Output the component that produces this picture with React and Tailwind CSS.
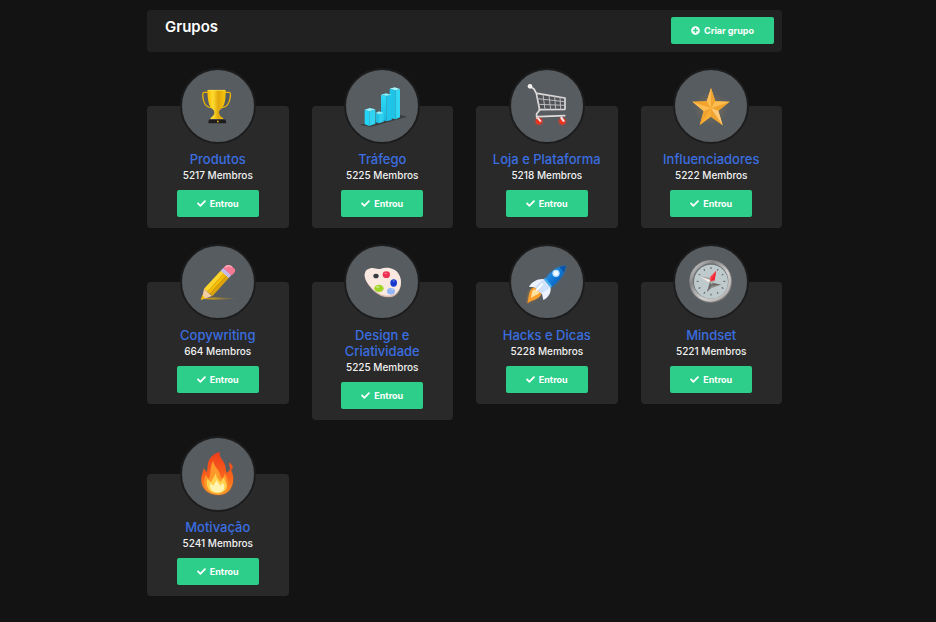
import { FaCheck, FaPlusCircle } from 'react-icons/fa';

function TrophyIcon() {
  return (
    <>
      <defs>
        <linearGradient id="trophy-gold" x1="0" x2="1">
          <stop offset="0" stopColor="#f6b900" />
          <stop offset="0.3" stopColor="#ffdc2e" />
          <stop offset="0.6" stopColor="#e0a80c" />
          <stop offset="1" stopColor="#f8c70a" />
        </linearGradient>
      </defs>
      <path d="M92 80H79c-7 0-3 26 3 35 5 8 12 11 22 11M138 80h17c7 0 2 26-4 35-5 8-12 11-22 11" fill="none" stroke="#eab308" strokeWidth="4" />
      <path d="M89 73h55c0 28-2 49-15 58-6 5-6 12-3 17 3 6 9 7 12 13H97c2-6 8-8 11-13 3-5 3-12-3-17-13-10-15-30-16-58z" fill="url(#trophy-gold)" />
      <path d="M91 74h51" stroke="#ffe45c" strokeWidth="2" />
      <path d="M94 160h49l3 13H92z" fill="#1e1c1c" />
      <path d="M94 160h49l1 3H94z" fill="#454040" />
      <rect x="118" y="165" width="5" height="5" fill="#eab308" />
    </>
  );
}

function ChartIcon() {
  return (
    <>
      <defs>
        <linearGradient id="bar-cyan" x1="0" y1="0" x2="0" y2="1">
          <stop offset="0" stopColor="#2fdcf8" />
          <stop offset="1" stopColor="#19b9e2" />
        </linearGradient>
      </defs>
      <path d="M54 178l108-34 35 9-110 31z" fill="#3c3d3f" />
      <path d="M144 69l18 5v87l-18-4z" fill="#1dc4e8" />
      <path d="M162 74l13-4v85l-13 6z" fill="#30d6f2" />
      <path d="M144 69l15-4 16 5-13 4z" fill="#a4f8ff" />
      <path d="M118 87l16 4v76l-16-5z" fill="url(#bar-cyan)" />
      <path d="M134 91l16-4v76l-16 4z" fill="#22c3e9" />
      <path d="M118 87l15-4 17 4-16 4z" fill="#7cf3ff" />
      <path d="M102 142l10 4v27l-10-3z" fill="#20bfe6" />
      <path d="M112 146l14-4v26l-14 5z" fill="#2fd0ee" />
      <path d="M102 142l10-5 14 5-14 4z" fill="#8af4ff" />
      <path d="M69 132l14 5v44l-14-5z" fill="#22d4f5" />
      <path d="M83 137l18-6v43l-18 7z" fill="#30d4f2" />
      <path d="M69 132l15-5 17 4-18 6z" fill="#8ef6ff" />
    </>
  );
}

function CartIcon() {
  return (
    <>
      <defs>
        <filter id="cart-glow" x="-30%" y="-30%" width="160%" height="160%">
          <feGaussianBlur stdDeviation="3" />
        </filter>
      </defs>
      <path d="M91 83l84 14v35H98z" fill="#4c5054" opacity="0.7" />
      <g fill="none" stroke="#dedada" strokeLinejoin="round" strokeLinecap="round">
        <path d="M69 62l13 8 7 13 10 50-9 11c-2 6 1 9 6 9l78-3" strokeWidth="5" />
        <path d="M91 83l84 14v34l-77 1" strokeWidth="5" />
        <path d="M94 99l80 9M96 116l79 3M109 87l6 44M127 90l5 41M144 92l3 38M160 95l2 35" strokeWidth="3" stroke="#bdbbbc" />
      </g>
      <circle cx="70" cy="62" r="7" fill="#f4f1f1" />
      <path d="M89 151l2 10M163 150l3 9" stroke="#dddada" strokeWidth="4" />
      <g fill="#ff3722" opacity="0.6" filter="url(#cart-glow)">
        <circle cx="97" cy="167" r="11" />
        <circle cx="167" cy="167" r="11" />
      </g>
      <g fill="#f0311c">
        <circle cx="97" cy="167" r="9" />
        <circle cx="167" cy="167" r="9" />
      </g>
      <path d="M90 157l5-3 10 13-5 2zM160 156l6-3 9 14-6 2z" fill="#f5e6e5" />
    </>
  );
}

function StarIcon() {
  return (
    <>
      <defs>
        <radialGradient id="star-glow">
          <stop offset="0.3" stopColor="#ffb640" stopOpacity="0.15" />
          <stop offset="1" stopColor="#ffb640" stopOpacity="0" />
        </radialGradient>
      </defs>
      <circle cx="121" cy="128" r="52" fill="url(#star-glow)" />
      <path d="M121 67l13 40 43 1-34 27 13 44-35-26-34 26 12-43-34-28 43-1z" fill="#f9ae36" />
      <path d="M121 67v61l13-21zM177 108l-56 20 22 7zM156 179l-35-51v25zM87 179l34-51-22 8zM65 108l56 20-13-21z" fill="#f0a32e" />
      <path d="M121 67l-13 40 13 21zM134 107l43 1-56 20zM65 108l34 28 22-8z" fill="#fdbd50" />
      <path d="M143 135l13 44-35-51z" fill="#ffc977" />
    </>
  );
}

function PencilIcon() {
  return (
    <>
      <defs>
        <linearGradient id="pencil-line" x1="0" x2="1">
          <stop offset="0" stopColor="#f0b400" />
          <stop offset="1" stopColor="#c08a20" stopOpacity="0" />
        </linearGradient>
      </defs>
      <path d="M70 171l40-4 77 4-77 3z" fill="url(#pencil-line)" />
      <path d="M79 141l24 22-31 11z" fill="#f5cda3" />
      <path d="M74 160l-5 15 14-6z" fill="#eebc00" />
      <path d="M79 141l50-54 10 7-50 56z" fill="#ffd52b" />
      <path d="M89 150l50-56 8 7-50 55z" fill="#f7bd05" />
      <path d="M97 156l50-55 7 7-50 56z" fill="#dda30b" />
      <path d="M129 87l8-8 24 21-8 9z" fill="#cfc5f4" />
      <path d="M134 82l24 21M131 85l24 21" stroke="#a7a0d8" strokeWidth="1.5" />
      <path d="M137 79c7-9 15-12 27-4s10 14 2 23l-5 3z" fill="#f77994" />
      <path d="M142 78c6-7 14-7 21-1" stroke="#ffacb9" strokeWidth="4" fill="none" />
    </>
  );
}

function PaletteIcon() {
  return (
    <>
      <path d="M86 82c12-4 19 5 32 1 16-5 39-3 51 13 14 18 11 48-6 63-16 14-46 9-68-12-16-16-30-37-25-52 2-7 8-11 16-13z" fill="#d9b8a9" />
      <path d="M86 80c12-4 19 5 32 1 16-5 39-3 51 13 14 18 11 47-6 61-16 13-46 8-67-11-17-15-31-36-26-51 2-7 8-11 16-13z" fill="#f9e9e1" />
      <ellipse cx="103" cy="103" rx="8" ry="7" fill="#353c44" />
      <ellipse cx="134" cy="99" rx="11" ry="10" fill="#ef3153" />
      <ellipse cx="156" cy="124" rx="10" ry="11" fill="#1639cf" />
      <ellipse cx="112" cy="140" rx="14" ry="11" fill="#a0d527" />
      <ellipse cx="148" cy="149" rx="12" ry="10" fill="#93b5fa" />
      <g fill="#fff" opacity="0.4">
        <ellipse cx="132" cy="95" rx="4" ry="2" />
        <ellipse cx="156" cy="118" rx="3" ry="2" />
        <ellipse cx="108" cy="136" rx="5" ry="3" />
        <ellipse cx="152" cy="143" rx="4" ry="2" />
      </g>
    </>
  );
}

function RocketIcon() {
  return (
    <>
      <defs>
        <filter id="rocket-glow" x="-30%" y="-30%" width="160%" height="160%">
          <feGaussianBlur stdDeviation="4" />
        </filter>
        <linearGradient id="rocket-body" x1="0" y1="0" x2="1" y2="1">
          <stop offset="0.2" stopColor="#2590e6" />
          <stop offset="0.7" stopColor="#0767c5" />
        </linearGradient>
      </defs>
      <path d="M118 110c12-20 34-36 59-38 0 22-20 46-43 65z" fill="#1483ee" opacity="0.5" filter="url(#rocket-glow)" />
      <path d="M84 138c-16 3-19 23-22 47 15-10 34-15 41-30z" fill="#ff9c2a" opacity="0.5" filter="url(#rocket-glow)" />
      <path d="M84 137c-20 5-15 26-22 48 15-12 34-10 42-28z" fill="#fb9e29" />
      <path d="M84 143c-11 5-8 15-11 27 13-11 20-8 26-18z" fill="#ffe1a0" />
      <path d="M118 110c12-20 34-36 59-38 0 22-20 46-43 65z" fill="url(#rocket-body)" />
      <path d="M158 76c6-2 12-4 19-4 0 8-2 14-5 20z" fill="#0c55aa" />
      <path d="M110 113l6-5 20 25-4 7z" fill="#45adf0" />
      <path d="M110 112l22 27c1 15-6 28-22 36l-4-18-23-20-16-2c9-14 24-24 43-23z" fill="#eef4ff" />
      <path d="M108 114l-24 22 20 20 27-18z" fill="#d0e2fb" />
      <path d="M108 126l-20 22" stroke="#fff" strokeWidth="5" />
      <circle cx="148" cy="95" r="11" fill="#b9dfff" />
      <circle cx="148" cy="95" r="7" fill="#f2fdff" />
    </>
  );
}

function CompassIcon() {
  const ticks = Array.from({ length: 12 }, (_, i) => i * 30);

  return (
    <>
      <defs>
        <linearGradient id="compass-rim" x1="0" y1="0" x2="1" y2="1">
          <stop offset="0" stopColor="#e6e4e4" />
          <stop offset="0.3" stopColor="#858585" />
          <stop offset="0.6" stopColor="#d2d0cf" />
          <stop offset="1" stopColor="#aaa8a7" />
        </linearGradient>
      </defs>
      <circle cx="120" cy="119" r="64" fill="#858383" />
      <circle cx="119" cy="118" r="62" fill="url(#compass-rim)" />
      <circle cx="120" cy="118" r="53" fill="#6c7174" />
      <circle cx="121" cy="120" r="51" fill="#bfcacc" />
      {ticks.map((angle) => (
        <path key={angle} d="M121 76v6" stroke="#5b6466" strokeWidth="3" transform={`rotate(${angle} 121 119)`} />
      ))}
      <path d="M87 104l33 4-4 15z" fill="#a8a7a5" />
      <path d="M87 104l31 11-2 8z" fill="#f5f2ef" />
      <path d="M118 122l33 7-28 10-14 12z" fill="#8d8b89" />
      <path d="M118 122l33 7-28 3-14 19z" fill="#6a6968" />
      <path d="M136 87l-18 20 1 13 13-3z" fill="#ff3d45" />
      <path d="M136 87l-15 31 11-2z" fill="#ee2436" />
      <path d="M114 120l17-4-7 13z" fill="#aaa8a6" />
    </>
  );
}

function FireIcon() {
  return (
    <>
      <defs>
        <filter id="fire-soft" x="-20%" y="-20%" width="140%" height="140%">
          <feGaussianBlur stdDeviation="1.5" />
        </filter>
        <filter id="fire-glow" x="-30%" y="-30%" width="160%" height="160%">
          <feGaussianBlur stdDeviation="5" />
        </filter>
        <linearGradient id="fire-outer" x1="0" y1="0" x2="0" y2="1">
          <stop offset="0" stopColor="#ee3c1b" />
          <stop offset="0.6" stopColor="#f9651b" />
          <stop offset="1" stopColor="#ff9b27" />
        </linearGradient>
      </defs>
      <ellipse cx="119" cy="145" rx="45" ry="38" fill="#ff6b1e" opacity="0.4" filter="url(#fire-glow)" />
      <path d="M126 55c-3 17 10 22 15 36 5 13 2 20 6 27 6-3 9-9 10-16 15 25 12 53-3 69-12 13-31 15-48 11-24-6-37-28-35-49 1-12 6-18 7-29 5 4 7 8 8 13 6-7 1-22 8-37 7-14 17-21 32-25zM156 86c8 8 12 14 7 22-7-3-10-13-7-22z" fill="url(#fire-outer)" />
      <g filter="url(#fire-soft)">
        <path d="M107 80c0 17 13 24 18 36 4 8 2 14 7 18 6-3 9-9 9-16 14 24 10 42 0 53-12 11-39 11-51-2-11-12-14-27-6-45 4 5 6 9 9 12 10-14 0-29 14-56z" fill="#ff982c" />
        <path d="M115 118c0 13 8 18 13 27l12-15c0 18 14 23 4 38-11 14-39 15-49 2-9-12-8-24-6-34l11 9c5-8 9-15 15-27z" fill="#ffd34f" />
        <path d="M117 139c2 9 8 10 11 17l8-9c5 12 6 19-2 25-10 7-26 5-33-3-5-7-4-14-3-20l9 7z" fill="#fff3b1" />
      </g>
    </>
  );
}

const groups = [
  { name: 'Produtos', members: 5217, Icon: TrophyIcon },
  { name: 'Tráfego', members: 5225, Icon: ChartIcon },
  { name: 'Loja e Plataforma', members: 5218, Icon: CartIcon },
  { name: 'Influenciadores', members: 5222, Icon: StarIcon },
  { name: 'Copywriting', members: 664, Icon: PencilIcon },
  { name: 'Design e Criatividade', members: 5225, Icon: PaletteIcon },
  { name: 'Hacks e Dicas', members: 5228, Icon: RocketIcon },
  { name: 'Mindset', members: 5221, Icon: CompassIcon },
  { name: 'Motivação', members: 5241, Icon: FireIcon }
];

function GroupCard({ group }) {
  const { name, members, Icon } = group;

  return (
    <article className="flex flex-col items-center rounded bg-[#292929] px-3 pb-[11px] text-center">
      <div className="-mt-[38px] mb-[7px] size-[76px] rounded-full border-2 border-[#1d1d1d] bg-[#575c60]">
        <svg viewBox="13 13 216 216" className="size-full" aria-hidden="true">
          <Icon />
        </svg>
      </div>
      <h2 className="text-[13px] leading-4 font-medium text-[#3b6ee0]">
        <a href="#" className="hover:underline">{name}</a>
      </h2>
      <p className="text-[10px] leading-4 font-medium text-[#f1f1f1]">{members} Membros</p>
      <button
        type="button"
        className="mt-[7px] flex h-[27px] w-[82px] items-center justify-center gap-1 rounded-xs bg-[#2dce89] text-[9px] font-bold text-white hover:bg-[#26b87a]"
      >
        <FaCheck aria-hidden="true" />
        Entrou
      </button>
    </article>
  );
}

function App() {
  return (
    <div className="min-h-screen bg-[#131313] py-[10px] pr-[7px] font-[Inter,sans-serif]">
      <main className="mx-auto max-w-[635px]">
        <header className="flex items-start justify-between rounded bg-[#212121] py-[7px] pr-2 pl-[18px]">
          <h1 className="text-[15px] leading-5 font-semibold text-white">Grupos</h1>
          <button
            type="button"
            className="mb-px flex h-[27px] w-[103px] items-center justify-center gap-1 rounded-xs bg-[#2dce89] text-[9px] font-bold text-white hover:bg-[#26b87a]"
          >
            <FaPlusCircle aria-hidden="true" />
            Criar grupo
          </button>
        </header>

        <section className="mt-[54px] grid grid-cols-2 items-start gap-x-[23px] gap-y-[54px] sm:grid-cols-4">
          {groups.map((group) => (
            <GroupCard key={group.name} group={group} />
          ))}
        </section>
      </main>
    </div>
  );
}

export default App;
